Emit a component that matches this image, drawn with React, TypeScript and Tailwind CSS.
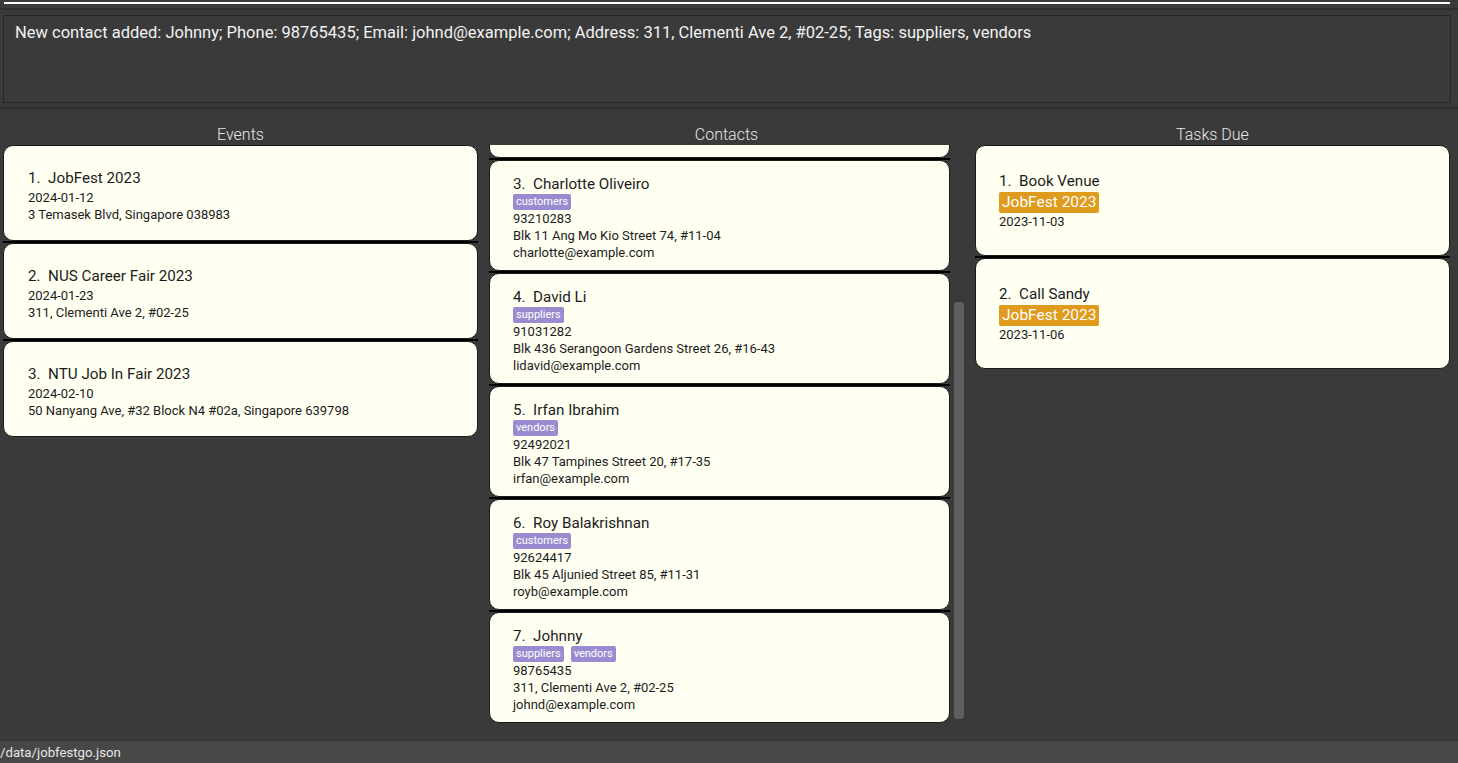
import React from "react";

const events = [
  { name: "JobFest 2023", date: "2024-01-12", address: "3 Temasek Blvd, Singapore 038983" },
  { name: "NUS Career Fair 2023", date: "2024-01-23", address: "311, Clementi Ave 2, #02-25" },
  { name: "NTU Job In Fair 2023", date: "2024-02-10", address: "50 Nanyang Ave, #32 Block N4 #02a, Singapore 639798" },
];

const contacts = [
  { name: "Bernice Yu", tags: ["colleagues"], phone: "99272758", address: "Blk 30 Lorong 3 Serangoon Gardens, #07-18", email: "berniceyu@example.com" },
  { name: "Charlotte Oliveiro", tags: ["customers"], phone: "93210283", address: "Blk 11 Ang Mo Kio Street 74, #11-04", email: "charlotte@example.com" },
  { name: "David Li", tags: ["suppliers"], phone: "91031282", address: "Blk 436 Serangoon Gardens Street 26, #16-43", email: "lidavid@example.com" },
  { name: "Irfan Ibrahim", tags: ["vendors"], phone: "92492021", address: "Blk 47 Tampines Street 20, #17-35", email: "irfan@example.com" },
  { name: "Roy Balakrishnan", tags: ["customers"], phone: "92624417", address: "Blk 45 Aljunied Street 85, #11-31", email: "royb@example.com" },
  { name: "Johnny", tags: ["suppliers", "vendors"], phone: "98765435", address: "311, Clementi Ave 2, #02-25", email: "johnd@example.com" },
];

const tasks = [
  { name: "Book Venue", event: "JobFest 2023", date: "2023-11-03" },
  { name: "Call Sandy", event: "JobFest 2023", date: "2023-11-06" },
];

const Cell: React.FC<{ first: boolean; children: React.ReactNode; className?: string }> = ({ first, children, className }) => (
  <div className={first ? "" : "border-t-2 border-black"}>
    <div className={"bg-[#fffff2] border border-[#1a1a1a] rounded-[10px] " + (className ?? "")}>{children}</div>
  </div>
);

export default function App() {
  return (
    <div
      className="h-[763px] w-full bg-[#3a3a3a] flex flex-col overflow-hidden text-[#1c1c1c]"
      style={{ fontFamily: "Roboto, 'Noto Sans', sans-serif" }}
    >
      {/* menu strip */}
      <div className="h-[10px] shrink-0 px-[4px] pt-[2px] border-b-2 border-[#2e2e2e]">
        <div className="h-[2px] w-[1446px] bg-white" />
      </div>

      {/* result display */}
      <div className="shrink-0 px-[3px] pt-[5px] pb-[4px] border-b-2 border-[#2e2e2e]">
        <div className="h-[88px] w-[1448px] border border-[#262626] bg-[#3a3a3a] px-[11px] pt-[6px]">
          <p className="text-[16.5px] leading-[22px] text-[#f2f2f2]">
            New contact added: Johnny; Phone: 98765435; Email: johnd@example.com; Address: 311, Clementi Ave 2, #02-25; Tags: suppliers, vendors
          </p>
        </div>
      </div>

      {/* main panels */}
      <div className="flex-1 flex gap-[11px] pl-[3px] pr-[8px] min-h-0">
        {/* events */}
        <div className="w-[475px] flex flex-col">
          <div className="h-[36px] shrink-0 pt-[15px] text-center text-[16px] leading-[22px] text-[#e8e8e8] font-light">Events</div>
          <div className="flex flex-col">
            {events.map((e, i) => (
              <Cell key={i} first={i === 0} className="h-[96px] pl-[24px] pt-[22px]">
                <div className="text-[15.2px] leading-[21px]">
                  {i + 1}.&nbsp; {e.name}
                </div>
                <div className="text-[13px] leading-[17px]">{e.date}</div>
                <div className="text-[13px] leading-[17px]">{e.address}</div>
              </Cell>
            ))}
          </div>
        </div>

        {/* contacts */}
        <div className="w-[475px] flex flex-col">
          <div className="h-[36px] shrink-0 pt-[15px] text-center text-[16px] leading-[22px] text-[#e8e8e8] font-light">Contacts</div>
          <div className="flex h-[582px]">
            <div className="w-[461px] overflow-hidden">
              <div className="flex flex-col -mt-[98px]">
                {contacts.map((c, i) => (
                  <Cell key={i} first={i === 0} className="h-[111px] pl-[23px] pt-[13px]">
                    <div className="text-[15.2px] leading-[20px]">
                      {i + 2}.&nbsp; {c.name}
                    </div>
                    <div className="flex gap-[7px] h-[16px]">
                      {c.tags.map((t) => (
                        <span key={t} className="bg-[#9a8bd0] text-white text-[11px] leading-[16px] px-[3px] rounded-[2px]">
                          {t}
                        </span>
                      ))}
                    </div>
                    <div className="text-[13px] leading-[17px]">{c.phone}</div>
                    <div className="text-[13px] leading-[17px]">{c.address}</div>
                    <div className={"text-[13px] leading-[17px] " + (i === 0 ? "invisible" : "")}>{c.email}</div>
                  </Cell>
                ))}
              </div>
            </div>
            <div className="w-[14px] flex justify-end">
              <div className="w-[10px] mt-[157px] h-[417px] bg-[#5e5e5e] rounded-[3px]" />
            </div>
          </div>
        </div>

        {/* tasks */}
        <div className="w-[475px] flex flex-col">
          <div className="h-[36px] shrink-0 pt-[15px] text-center text-[16px] leading-[22px] text-[#e8e8e8] font-light">Tasks Due</div>
          <div className="flex flex-col">
            {tasks.map((t, i) => (
              <Cell key={i} first={i === 0} className="h-[111px] pl-[23px] pt-[25px]">
                <div className="text-[15.2px] leading-[21px]">
                  {i + 1}.&nbsp; {t.name}
                </div>
                <div className="flex">
                  <span className="bg-[#e09a1c] text-white text-[15.5px] leading-[21px] px-[3px] rounded-[2px]">{t.event}</span>
                </div>
                <div className="text-[13px] leading-[17px]">{t.date}</div>
              </Cell>
            ))}
          </div>
        </div>
      </div>

      {/* status bar */}
      <div className="h-[23px] shrink-0 bg-[#474747] border-t border-[#333] text-[13.2px] leading-[24px] text-[#e8e8e8]">
        /data/jobfestgo.json
      </div>
    </div>
  );
}
